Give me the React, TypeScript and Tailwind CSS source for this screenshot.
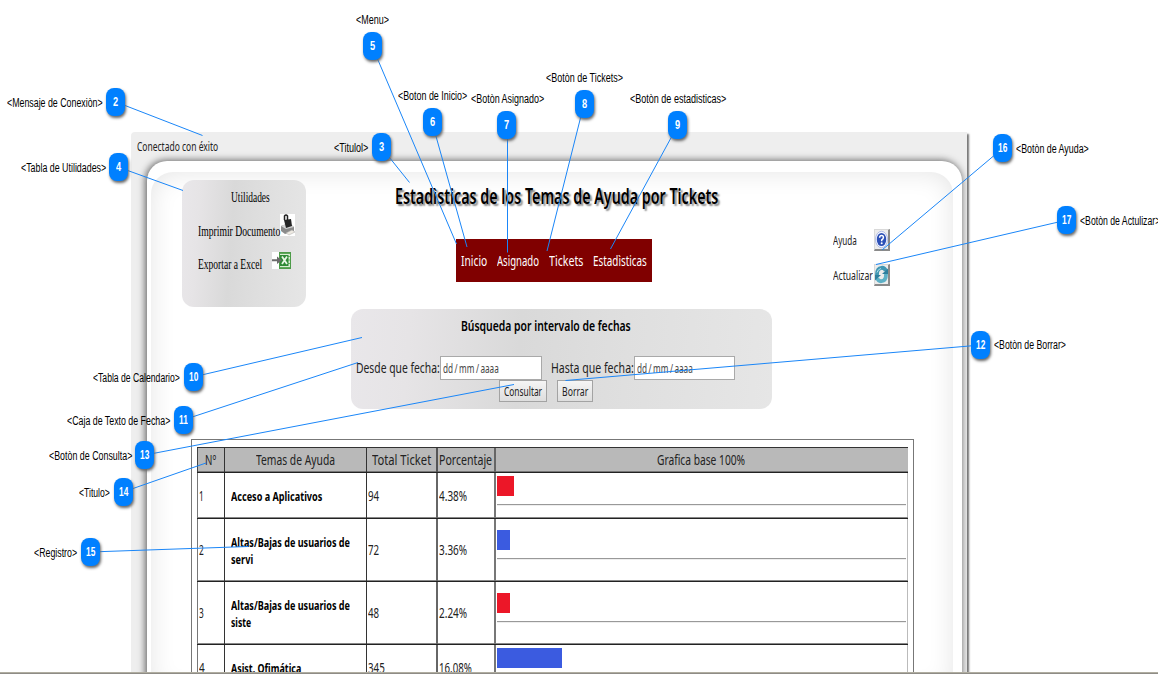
import { useLayoutEffect, useRef, useState } from "react";
import type { ReactNode } from "react";

const SANS = "font-['Noto_Sans','Open_Sans',sans-serif]";

/** One line of text, condensed horizontally to fill the width of its box. */
function Fit({ className, children }: { className: string; children: ReactNode }) {
  const box = useRef<HTMLSpanElement>(null);
  const text = useRef<HTMLSpanElement>(null);
  const [scale, setScale] = useState(1);
  useLayoutEffect(() => {
    if (box.current && text.current) {
      setScale(box.current.clientWidth / text.current.offsetWidth);
    }
  }, []);
  return (
    <span ref={box} className={`block shrink-0 whitespace-nowrap ${className}`}>
      <span ref={text} className="inline-block origin-left" style={{ transform: `scaleX(${scale})` }}>
        {children}
      </span>
    </span>
  );
}

const PINS = [
  { n: 2, pin: "left-[106px] top-[88px]", label: "<Mensaje de Conexiòn>", at: "left-[7px] top-[95px] w-[96px]" },
  { n: 3, pin: "left-[372px] top-[133px]", label: "<Titulol>", at: "left-[334px] top-[140px] w-[34px]" },
  { n: 4, pin: "left-[109px] top-[153px]", label: "<Tabla de Utilidades>", at: "left-[21px] top-[160px] w-[85px]" },
  { n: 5, pin: "left-[363px] top-[32px]", label: "<Menu>", at: "left-[356px] top-[12px] w-[33px]" },
  { n: 6, pin: "left-[423px] top-[108px]", label: "<Boton de Inicio>", at: "left-[398px] top-[88px] w-[69px]" },
  { n: 7, pin: "left-[497px] top-[111px]", label: "<Botòn Asignado>", at: "left-[471px] top-[91px] w-[73px]" },
  { n: 8, pin: "left-[575px] top-[90px]", label: "<Botòn de Tickets>", at: "left-[546px] top-[70px] w-[77px]" },
  { n: 9, pin: "left-[668px] top-[111px]", label: "<Botòn de estadisticas>", at: "left-[630px] top-[91px] w-[96px]" },
  { n: 10, pin: "left-[184px] top-[363px]", label: "<Tabla de Calendario>", at: "left-[93px] top-[370px] w-[87px]" },
  { n: 11, pin: "left-[174px] top-[406px]", label: "<Caja de Texto de Fecha>", at: "left-[67px] top-[413px] w-[103px]" },
  { n: 12, pin: "left-[971px] top-[331px]", label: "<Botòn de Borrar>", at: "left-[994px] top-[337px] w-[72px]" },
  { n: 13, pin: "left-[135px] top-[441px]", label: "<Botòn de Consulta>", at: "left-[49px] top-[448px] w-[83px]" },
  { n: 14, pin: "left-[114px] top-[478px]", label: "<Titulo>", at: "left-[79px] top-[485px] w-[31px]" },
  { n: 15, pin: "left-[81px] top-[538px]", label: "<Registro>", at: "left-[34px] top-[545px] w-[43px]" },
  { n: 16, pin: "left-[993px] top-[134px]", label: "<Botòn de Ayuda>", at: "left-[1016px] top-[141px] w-[73px]" },
  { n: 17, pin: "left-[1057px] top-[206px]", label: "<Botòn de Actulizar>", at: "left-[1080px] top-[213px] w-[80px]" },
];

const LINES = [
  [116, 102, 202.5, 135.5],
  [381, 147, 409.5, 182.5],
  [118, 167, 183, 190.5],
  [372, 46, 456.5, 244],
  [432, 122, 467, 247],
  [507.5, 125, 507.5, 252.5],
  [584, 104, 547, 251],
  [678, 125, 610.5, 249],
  [193, 377, 362, 337.5],
  [183, 420, 358, 362.5],
  [981, 345, 565.5, 380.5],
  [145, 455, 514, 384.5],
  [123, 492, 206, 463],
  [90, 552, 248, 546.5],
  [1003, 148, 882, 250],
  [1067, 220, 876, 264.5],
];

const ROWS = [
  { n: "1", nw: "w-[5px]", lines: [["Acceso a Aplicativos", "w-[91px]"]], total: "94", tw: "w-[11px]", pct: "4.38%", pw: "w-[28px]", h: "h-[46px]", bar: "w-[17px] bg-[#ec1728]", pad: "pt-[3px]" },
  { n: "2", nw: "w-[5px]", lines: [["Altas/Bajas de usuarios de", "w-[119px]"], ["servi", "w-[22px]"]], total: "72", tw: "w-[11px]", pct: "3.36%", pw: "w-[28px]", h: "h-[63px]", bar: "w-[13px] bg-[#3b5be0]", pad: "pt-[11px]" },
  { n: "3", nw: "w-[5px]", lines: [["Altas/Bajas de usuarios de", "w-[119px]"], ["siste", "w-[20px]"]], total: "48", tw: "w-[11px]", pct: "2.24%", pw: "w-[28px]", h: "h-[63px]", bar: "w-[13px] bg-[#ec1728]", pad: "pt-[11px]" },
  { n: "4", nw: "w-[6px]", lines: [["Asist. Ofimática", "w-[70px]"]], total: "345", tw: "w-[17px]", pct: "16.08%", pw: "w-[33px]", h: "h-[46px]", bar: "w-[65px] bg-[#3b5be0]", pad: "pt-[3px]" },
];

const GRID = "grid grid-cols-[27px_142px_70px_58px_414px]";

function StatsTable() {
  return (
    <div className="ml-[40px] mt-[30px] h-[260px] w-[723px] border border-[#777] pl-[5px] pt-[7px] text-[15px] leading-[20px] text-[#222]">
      <div className={`${GRID} h-[26px] w-[711px] border-b border-t border-b-[#222] border-t-[#333] bg-[#b9b9b9] shadow-[inset_0_-1px_0_#777]`}>
        <div className="flex items-center border-l border-[#444] pb-[2px] pl-[7px]"><Fit className="w-[11px]">Nº</Fit></div>
        <div className="flex items-center border-l border-[#333] pb-[2px] pl-[31px]"><Fit className="w-[79px]">Temas de Ayuda</Fit></div>
        <div className="flex items-center border-l border-[#333] pb-[2px] pl-[5px]"><Fit className="w-[59px]">Total Ticket</Fit></div>
        <div className="flex items-center border-l-2 border-[#555] pb-[2px] pl-[1px]"><Fit className="w-[53px]">Porcentaje</Fit></div>
        <div className="flex items-center border-l-2 border-[#666] pb-[2px] pl-[161px]"><Fit className="w-[88px]">Grafica base 100%</Fit></div>
      </div>
      {ROWS.map((r) => (
        <div key={r.n} className={`${GRID} ${r.h} w-[711px] border-b border-[#222] shadow-[inset_0_-1px_0_#888,inset_-1px_0_0_#bbb]`}>
          <div className="flex items-center border-l border-[#777] pb-[2px] pl-[1px]"><Fit className={r.nw}>{r.n}</Fit></div>
          <div className="flex flex-col justify-center border-l border-[#333] pl-[6px] pt-[1px] text-[12.5px] font-bold leading-[17px] text-black">
            {r.lines.map(([t, w]) => <Fit key={t} className={w}>{t}</Fit>)}
          </div>
          <div className="flex items-center border-l border-[#333] pb-[2px] pl-[1px]"><Fit className={r.tw}>{r.total}</Fit></div>
          <div className="flex items-center border-l-2 border-[#666] pb-[2px] pl-[1px]"><Fit className={r.pw}>{r.pct}</Fit></div>
          <div className={`border-l-2 border-[#777] pl-[1px] ${r.pad}`}>
            <div className={`h-[20px] ${r.bar}`} />
            <div className="mt-[8px] h-[2px] w-[409px] border-b border-t border-b-[#eee] border-t-[#999]" />
          </div>
        </div>
      ))}
    </div>
  );
}

function PrinterIcon() {
  return (
    <svg className="h-[22px] w-[15px] bg-white" viewBox="0 0 15 22">
      <path d="M1 12 L9 9 L14 13 L14 17 L5 20 L1 17 Z" fill="#8b8b8b" />
      <path d="M1 12 L9 9 L14 13 L6 15 Z" fill="#d5d5d5" />
      <path d="M4 6 L11 5 L12 12 L6 14 Z" fill="#262626" />
      <path d="M4.500 6 V2 Q6 0 7.500 2 V6" fill="none" stroke="#222" strokeWidth="1.500" />
      <path d="M6 19 L12 16 L15 18 L9 21 Z" fill="#eeeae2" stroke="#aaa" strokeWidth="0.500" />
    </svg>
  );
}

function ExcelIcon() {
  return (
    <svg className="h-[17px] w-[19px] bg-white" viewBox="0 0 19 17">
      <rect x="7.500" y="0.500" width="11" height="16" fill="#d9edd2" stroke="#4d9b48" />
      <path d="M8 1.500 H18 M8 15.500 H18" stroke="#5fa85a" />
      <path d="M16 4.500 H18 M16 8 H18 M16 11.500 H18" stroke="#6fb469" fill="none" />
      <rect x="8" y="3" width="8.500" height="11" fill="#2f8a35" />
      <path d="M10 4.500 L15 12 M15 4.500 L10 12" stroke="#e8f6e4" strokeWidth="1.800" />
      <path d="M0 7.200 H5 V4.500 L10 8.200 L5 12 V9.200 H0 Z" fill="#6b6b6b" />
    </svg>
  );
}

function HelpIcon() {
  return (
    <svg className="h-[19px] w-[13px]" viewBox="0 0 13 18">
      <ellipse cx="6.500" cy="9" rx="6" ry="8.200" fill="#f4f6ff" stroke="#aab8e4" strokeWidth="0.900" />
      <ellipse cx="6.500" cy="9" rx="4.700" ry="6.600" fill="#2c50b7" />
      <path d="M4.600 7.200 Q4.700 5 6.600 5 Q8.500 5 8.400 7 Q8.300 8.400 6.700 9.400 V10.700" fill="none" stroke="#fff" strokeWidth="1.500" />
      <circle cx="6.700" cy="12.800" r="1" fill="#fff" />
    </svg>
  );
}

function RefreshIcon() {
  return (
    <svg className="h-[19px] w-[13px]" viewBox="0 0 13 18">
      <path d="M2 9.500 Q1.800 2.700 6.500 2.300 Q9.700 2 10.800 5.500" fill="none" stroke="#4197b3" strokeWidth="3.800" />
      <path d="M11 8.500 Q11.200 15.300 6.500 15.700 Q3.300 16 2.200 12.500" fill="none" stroke="#5db0c6" strokeWidth="3.800" />
      <path d="M7 8.500 H13 V3 Z" fill="#2d7f9e" />
      <path d="M6 9.500 H0 V15 Z" fill="#2d7f9e" />
      <path d="M2 7 Q3 3.500 6 3" fill="none" stroke="#b0dfea" />
    </svg>
  );
}

const ICON_BUTTON = "flex h-[22px] w-[16px] items-center justify-center border border-b-2 border-r-2 border-[#d9d9d9] border-b-[#8a8a8a] border-r-[#8a8a8a] bg-[#ececec]";
const PANEL = "bg-[linear-gradient(94deg,#e9e7ea_0%,#e6e4e6_14%,#d9d9d9_40%,#dfdfdf_65%,#e6e6e6_100%)]";
const BUTTON = "flex h-[22px] items-center border border-[#a3a3a3] bg-linear-to-b from-[#f5f5f5] to-[#dedede] pt-[1px] text-[13px] text-[#222]";
const DATE = "flex h-[24px] items-center border border-[#a9a9a9] bg-white pl-[2px] pt-[1px] text-[13px] [word-spacing:-1px] text-[#444]";

export default function App() {
  return (
    <main className={`relative flex h-[675px] w-[1158px] flex-col overflow-hidden bg-white ${SANS}`}>
      <div className="ml-[131px] mt-[132px] h-[540px] w-[836px] overflow-visible rounded-tl-[4px] bg-[#eee] pl-[16px] shadow-[2px_2px_2px_#777] [clip-path:inset(0_-6px_0_0)]">
        <div className="flex h-[29px] items-center">
          <Fit className="ml-[-10px] w-[81px] text-[13px] text-[#222]">Conectado con éxito</Fit>
        </div>
        <div className="h-[520px] w-[815px] rounded-t-[20px] bg-white pl-[4px] pt-[11px] shadow-[-1px_0_7px_1px_#6b6b6b]">
          <div className="h-[520px] w-[802px] rounded-t-[22px] shadow-[inset_0_0_26px_#e4e4e4]">
            <div className="flex h-[137px] items-start">
              <section className={`ml-[31px] mt-[8px] h-[127px] w-[124px] shrink-0 rounded-[12px] pl-[16px] pt-[9px] font-['Liberation_Serif',serif] text-[14px] leading-[18px] text-black ${PANEL}`}>
                <Fit className="ml-[33px] w-[39px]">Utilidades</Fit>
                <div className="mt-[7px] flex h-[26px]">
                  <Fit className="mt-[9px] w-[82px]">Imprimir Documento</Fit>
                  <PrinterIcon />
                </div>
                <div className="mt-[12px] flex h-[22px]">
                  <Fit className="mr-[10px] mt-[4px] w-[64px]">Exportar a Excel</Fit>
                  <ExcelIcon />
                </div>
              </section>
              <div className="ml-[89px] w-[438px] shrink-0">
                <h1 className="mt-[9px] text-[21px] font-semibold leading-[30px] text-black [text-shadow:3px_2px_2px_#888]">
                  <Fit className="w-[323px]">Estadìsticas de los Temas de Ayuda por Tickets</Fit>
                </h1>
                <nav className="ml-[61px] mt-[28px] flex h-[43px] w-[196px] items-center bg-[#800000] pl-[5px] text-[15px] text-white">
                  <Fit className="w-[26px]">Inicio</Fit>
                  <Fit className="ml-[10px] w-[42px]">Asignado</Fit>
                  <Fit className="ml-[10px] w-[34px]">Tickets</Fit>
                  <Fit className="ml-[10px] w-[54px]">Estadìsticas</Fit>
                </nav>
              </div>
              <div className="mt-[57px] text-[12.500px] text-[#222]">
                <div className="flex h-[35px] items-start">
                  <Fit className="mt-[3px] mr-[17px] w-[24px]">Ayuda</Fit>
                  <span className={ICON_BUTTON}><HelpIcon /></span>
                </div>
                <div className="flex h-[35px] items-start">
                  <Fit className="mr-[1px] mt-[3px] w-[40px]">Actualizar</Fit>
                  <span className={ICON_BUTTON}><RefreshIcon /></span>
                </div>
              </div>
            </div>
            <section className={`ml-[200px] h-[100px] w-[421px] rounded-[12px] pt-[7px] ${PANEL}`}>
              <Fit className="ml-[110px] w-[170px] text-[14px] font-semibold leading-[20px] text-black">Búsqueda por intervalo de fechas</Fit>
              <div className="mt-[20px] flex items-center pl-[5px] text-[15px] text-[#222]">
                <Fit className="mt-[-2px] w-[84px]">Desde que fecha:</Fit>
                <div className={`${DATE} w-[102px]`}><Fit className="w-[56px]">dd / mm / aaaa</Fit></div>
                <Fit className="ml-[9px] mt-[-2px] w-[83px]">Hasta que fecha:</Fit>
                <div className={`${DATE} w-[101px]`}><Fit className="w-[56px]">dd / mm / aaaa</Fit></div>
              </div>
              <div className="flex gap-[10px] pl-[148px]">
                <button className={`${BUTTON} w-[48px] pl-[4px]`}><Fit className="w-[38px]">Consultar</Fit></button>
                <button className={`${BUTTON} w-[36px] pl-[4px]`}><Fit className="w-[26px]">Borrar</Fit></button>
              </div>
            </section>
            <StatsTable />
          </div>
        </div>
      </div>
      <footer className="relative h-[3px] shrink-0 border-b border-t border-b-white border-t-[#b0ada0] bg-[#8e8c86]" />
      <svg className="pointer-events-none absolute left-0 top-0 h-[675px] w-[1158px]" viewBox="0 0 1158 675">
        {LINES.map(([x1, y1, x2, y2], i) => (
          <line key={i} x1={x1} y1={y1} x2={x2} y2={y2} stroke="#1a86f8" strokeWidth="1" />
        ))}
      </svg>
      {PINS.map((p) => (
        <div key={p.n} className="font-['Liberation_Sans',Arial,sans-serif]">
          <div className={`absolute flex h-[28px] w-[19px] items-center justify-center rounded-[8px] bg-[#0080ff] text-[13px] font-bold text-white shadow-[1px_2px_3px_#666] ${p.pin}`}>
            <Fit className={p.n > 9 ? "w-[9px]" : "w-[5px]"}>{p.n}</Fit>
          </div>
          <div className={`absolute text-[12.5px] leading-[16px] text-black ${p.at}`}>
            <Fit className="w-full">{p.label}</Fit>
          </div>
        </div>
      ))}
    </main>
  );
}
